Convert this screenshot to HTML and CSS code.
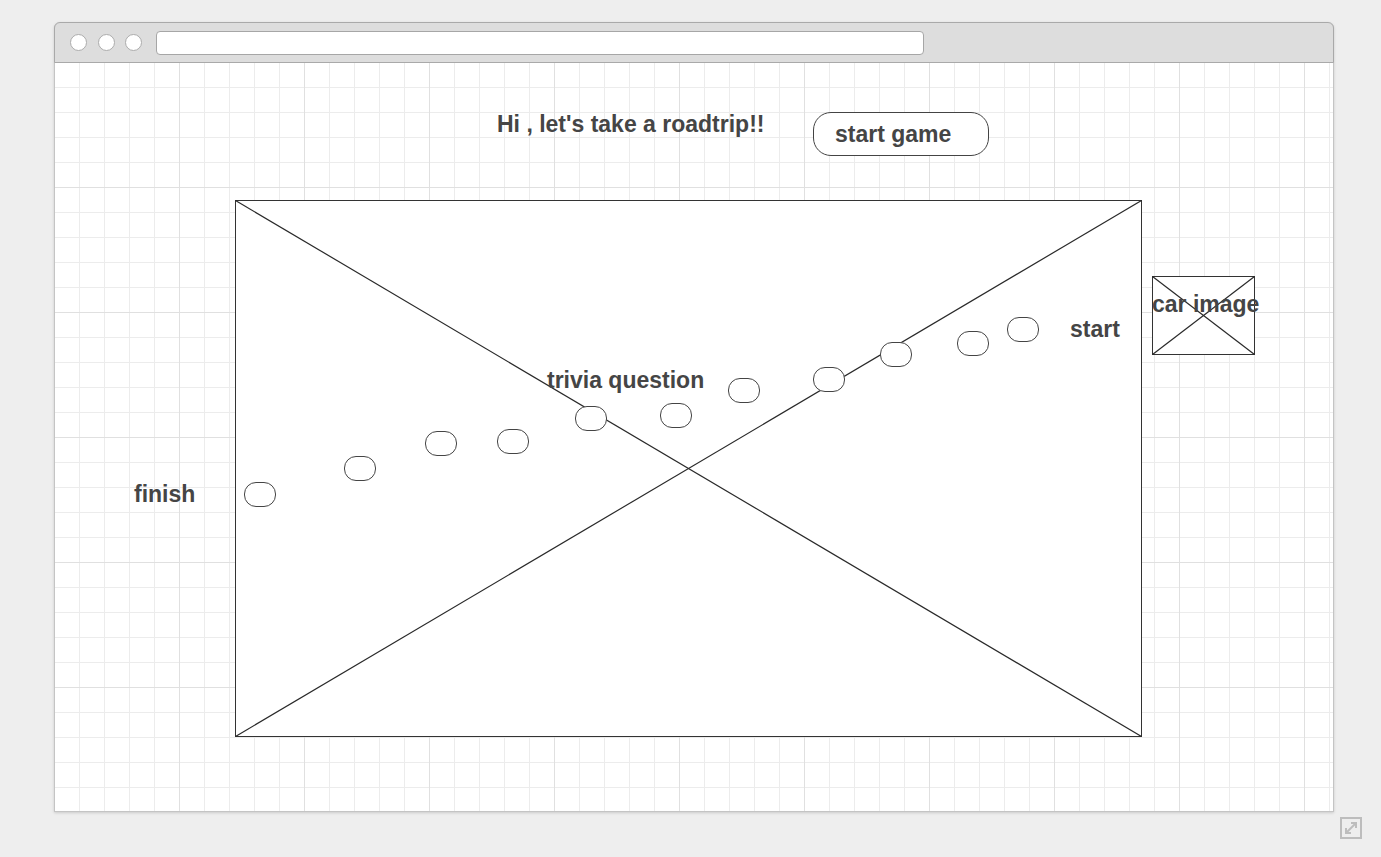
FILE: index.html
```html
<!DOCTYPE html>
<html>
<head>
<meta charset="utf-8">
<link rel="stylesheet" href="styles.css">
</head>
<body>
<div class="frame">
  <div class="titlebar">
    <span class="dot"></span><span class="dot"></span><span class="dot"></span>
    <div class="address"></div>
  </div>
  <div class="canvas">
    <div class="label title">Hi , let's take a roadtrip!!</div>
    <div class="btn">start game</div>

    <svg class="placeholder main" viewBox="0 0 907 537" preserveAspectRatio="none">
      <rect x="0.5" y="0.5" width="906" height="536" fill="#fff" stroke="#333" stroke-width="1"/>
      <line x1="0.5" y1="0.5" x2="906.5" y2="536.5" stroke="#2a2a2a" stroke-width="1.2"/>
      <line x1="906.5" y1="0.5" x2="0.5" y2="536.5" stroke="#2a2a2a" stroke-width="1.2"/>
    </svg>

    <svg class="placeholder car" viewBox="0 0 103 79" preserveAspectRatio="none">
      <rect x="0.5" y="0.5" width="102" height="78" fill="#fff" stroke="#333" stroke-width="1"/>
      <line x1="0.5" y1="0.5" x2="102.5" y2="78.5" stroke="#2a2a2a" stroke-width="1.2"/>
      <line x1="102.5" y1="0.5" x2="0.5" y2="78.5" stroke="#2a2a2a" stroke-width="1.2"/>
    </svg>

    <div class="oval" style="left:189px;top:419px"></div>
    <div class="oval" style="left:289px;top:393px"></div>
    <div class="oval" style="left:370px;top:368px"></div>
    <div class="oval" style="left:442px;top:366px"></div>
    <div class="oval" style="left:520px;top:343px"></div>
    <div class="oval" style="left:605px;top:340px"></div>
    <div class="oval" style="left:673px;top:315px"></div>
    <div class="oval" style="left:758px;top:304px"></div>
    <div class="oval" style="left:825px;top:279px"></div>
    <div class="oval" style="left:902px;top:268px"></div>
    <div class="oval" style="left:952px;top:254px"></div>

    <div class="label trivia">trivia question</div>
    <div class="label finish">finish</div>
    <div class="label start">start</div>
    <div class="label carlabel">car image</div>
  </div>
</div>
<div class="expand">
  <svg width="22" height="22" viewBox="0 0 22 22">
    <rect x="1" y="1" width="20" height="20" fill="none" stroke="#bdbdbd" stroke-width="2"/>
    <line x1="6" y1="16" x2="16" y2="6" stroke="#bdbdbd" stroke-width="2"/>
    <polyline points="11,6 16,6 16,11" fill="none" stroke="#bdbdbd" stroke-width="2"/>
    <polyline points="6,11 6,16 11,16" fill="none" stroke="#bdbdbd" stroke-width="2"/>
  </svg>
</div>
</body>
</html>
```

FILE: styles.css
```css
html, body {
  margin: 0;
  padding: 0;
  background: #eeeeee;
  font-family: "Liberation Sans", Arial, Helvetica, sans-serif;
}

body {
  width: 1381px;
  height: 857px;
  overflow: hidden;
  position: relative;
}

.frame {
  margin-left: 54px;
  margin-top: 22px;
  width: 1280px;
  height: 790px;
  box-sizing: border-box;
  border: 1px solid #c4c4c4;
  border-top: none;
  border-radius: 6px 6px 0 0;
  box-shadow: 0 1px 3px rgba(0, 0, 0, 0.15);
  background: #fff;
  display: flex;
  flex-direction: column;
}

.titlebar {
  height: 41px;
  box-sizing: border-box;
  background: #dddddd;
  border: 1px solid #a9a9a9;
  margin: 0 -1px;
  border-radius: 6px 6px 0 0;
  display: flex;
  align-items: center;
  padding-left: 15px;
  gap: 10.5px;
  flex-shrink: 0;
}

.dot {
  width: 17px;
  height: 17px;
  border-radius: 50%;
  background: #fff;
  border: 1px solid #acacac;
  box-sizing: border-box;
}

.address {
  margin-left: 3px;
  width: 768px;
  height: 24px;
  box-sizing: border-box;
  background: #fff;
  border: 1px solid #a6a6a6;
  border-radius: 4px;
}

.canvas {
  position: relative;
  flex: 1;
  background-color: #ffffff;
  background-image:
    linear-gradient(to right, transparent 124px, #e0e0e0 124px),
    linear-gradient(to bottom, transparent 124px, #e0e0e0 124px),
    linear-gradient(to right, transparent 24px, #ececec 24px),
    linear-gradient(to bottom, transparent 24px, #ececec 24px);
  background-size: 125px 125px, 125px 125px, 25px 25px, 25px 25px;
}

.label {
  position: absolute;
  color: #454545;
  font-weight: bold;
  font-size: 23px;
  line-height: 26px;
  white-space: nowrap;
}

.title { left: 442px; top: 48px; }

.btn {
  position: absolute;
  left: 758px;
  top: 49px;
  width: 176px;
  height: 44px;
  box-sizing: border-box;
  border: 1px solid #444;
  border-radius: 18px;
  background: #fff;
  color: #454545;
  font-weight: bold;
  font-size: 23px;
  line-height: 42px;
  padding-left: 21px;
}

.placeholder {
  position: absolute;
  display: block;
}

.main {
  left: 180px;
  top: 137px;
  width: 907px;
  height: 537px;
}

.car {
  left: 1097px;
  top: 213px;
  width: 103px;
  height: 79px;
}

.oval {
  position: absolute;
  width: 32px;
  height: 25px;
  box-sizing: border-box;
  border: 1px solid #444;
  border-radius: 12px / 12px;
  background: #fff;
}

.trivia { left: 492px; top: 304px; }
.finish { left: 79px; top: 418px; }
.start { left: 1015px; top: 253px; }
.carlabel { left: 1097px; top: 228px; }

.expand {
  position: absolute;
  left: 1340px;
  top: 817px;
  width: 22px;
  height: 22px;
}
```
